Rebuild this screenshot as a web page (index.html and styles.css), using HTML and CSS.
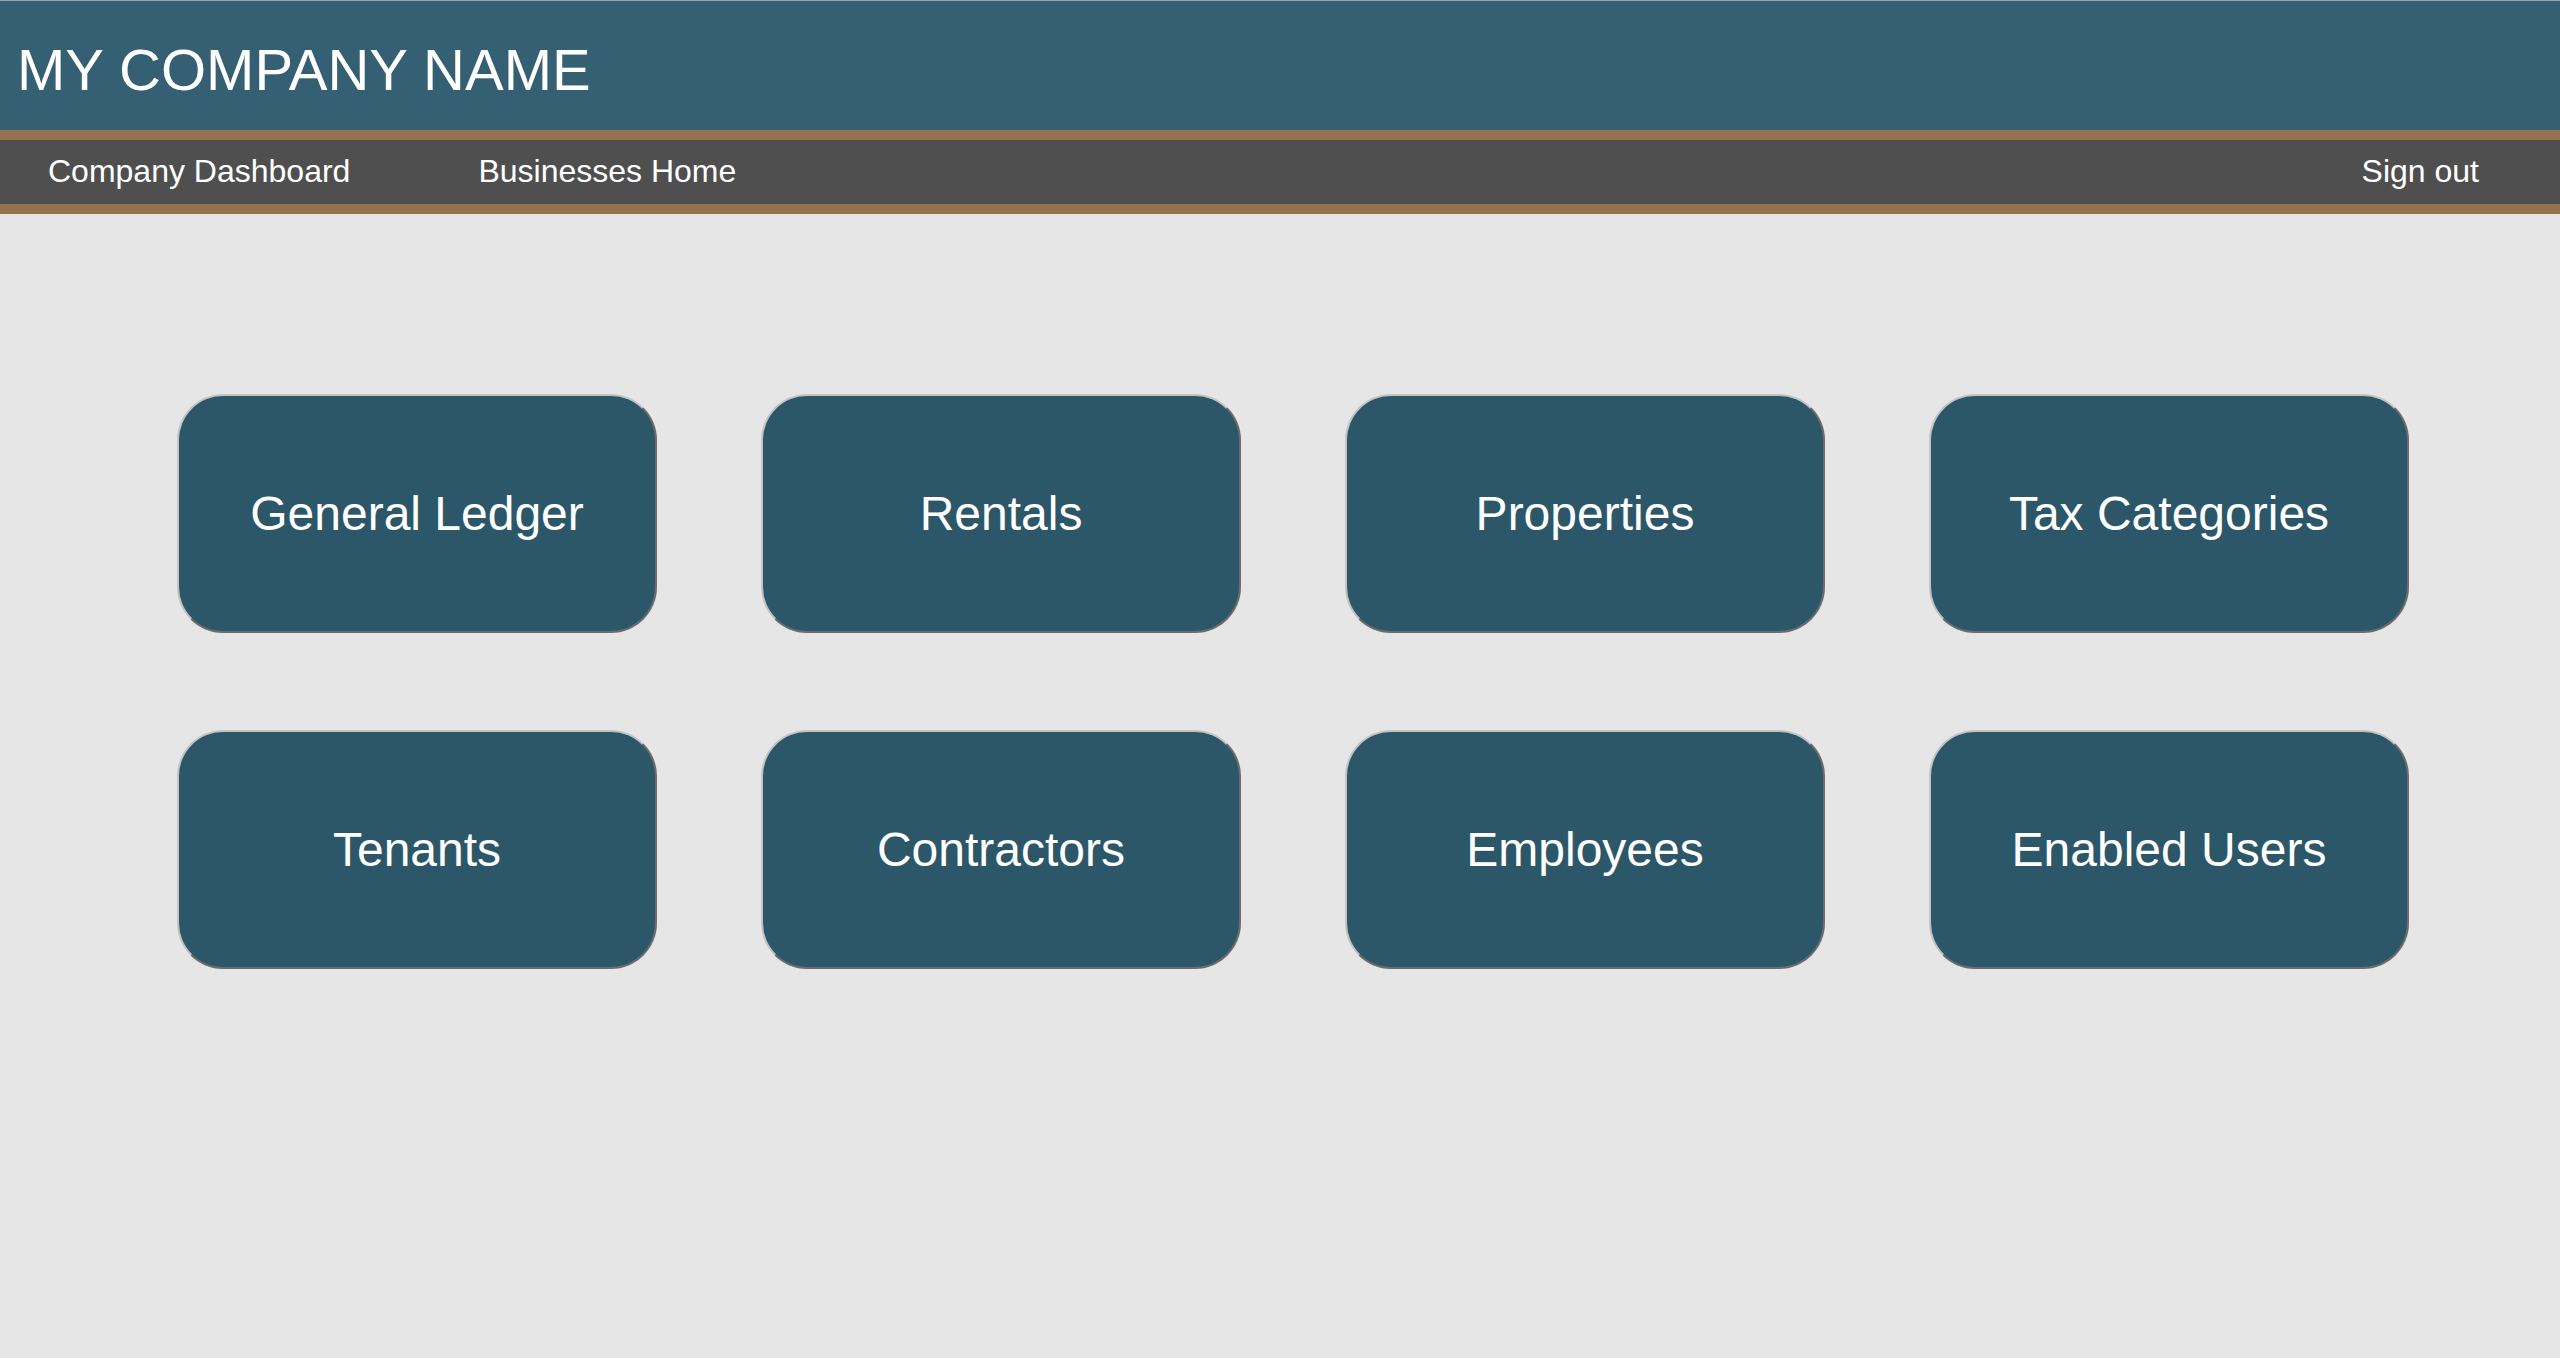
FILE: index.html
```html
<!DOCTYPE html>
<html lang="en">
<head>
<meta charset="utf-8">
<title>My Company Name</title>
<link rel="stylesheet" href="styles.css">
</head>
<body>
<header class="site-header">
  <h1 class="brand">MY COMPANY NAME</h1>
</header>
<nav class="main-nav">
  <a class="nav-link" href="#">Company Dashboard</a>
  <a class="nav-link" href="#">Businesses Home</a>
  <a class="nav-link nav-signout" href="#">Sign out</a>
</nav>
<main class="dashboard">
  <div class="tile-grid">
    <a class="tile" href="#">General Ledger</a>
    <a class="tile" href="#">Rentals</a>
    <a class="tile" href="#">Properties</a>
    <a class="tile" href="#">Tax Categories</a>
    <a class="tile" href="#">Tenants</a>
    <a class="tile" href="#">Contractors</a>
    <a class="tile" href="#">Employees</a>
    <a class="tile" href="#">Enabled Users</a>
  </div>
</main>
</body>
</html>
```
FILE: styles.css
```css
html, body {
  margin: 0;
  padding: 0;
}
body {
  background: #e6e6e6;
  font-family: "Liberation Sans", Arial, Helvetica, sans-serif;
  min-height: 1358px;
}
.site-header {
  box-sizing: border-box;
  height: 130px;
  border-top: 1px solid #a4a4a4;
  background: #355f73;
  display: flex;
  align-items: center;
  padding: 8px 0 0 17px;
}
.brand {
  margin: 0;
  font-weight: normal;
  font-size: 58px;
  line-height: 1;
  color: #ffffff;
}
.main-nav {
  box-sizing: border-box;
  height: 84px;
  background: #4f4f4f;
  border-top: 10px solid #94714f;
  border-bottom: 10px solid #94714f;
  display: flex;
  align-items: center;
  padding: 0 81px 3px 48px;
  gap: 128px;
}
.nav-link {
  color: #ffffff;
  text-decoration: none;
  font-size: 32px;
  line-height: 1;
}
.nav-signout {
  margin-left: auto;
}
.dashboard {
  padding: 180px 0 0 177px;
}
.tile-grid {
  display: grid;
  grid-template-columns: repeat(4, 480px);
  grid-auto-rows: 239px;
  column-gap: 104px;
  row-gap: 97px;
}
.tile {
  box-sizing: border-box;
  display: flex;
  align-items: center;
  justify-content: center;
  background: #2b5769;
  border: 2px solid;
  border-color: #c3c3c3 #6c6c6c #6c6c6c #c3c3c3;
  border-radius: 46px;
  color: #ffffff;
  text-decoration: none;
  font-size: 48px;
  line-height: 1;
}
```
